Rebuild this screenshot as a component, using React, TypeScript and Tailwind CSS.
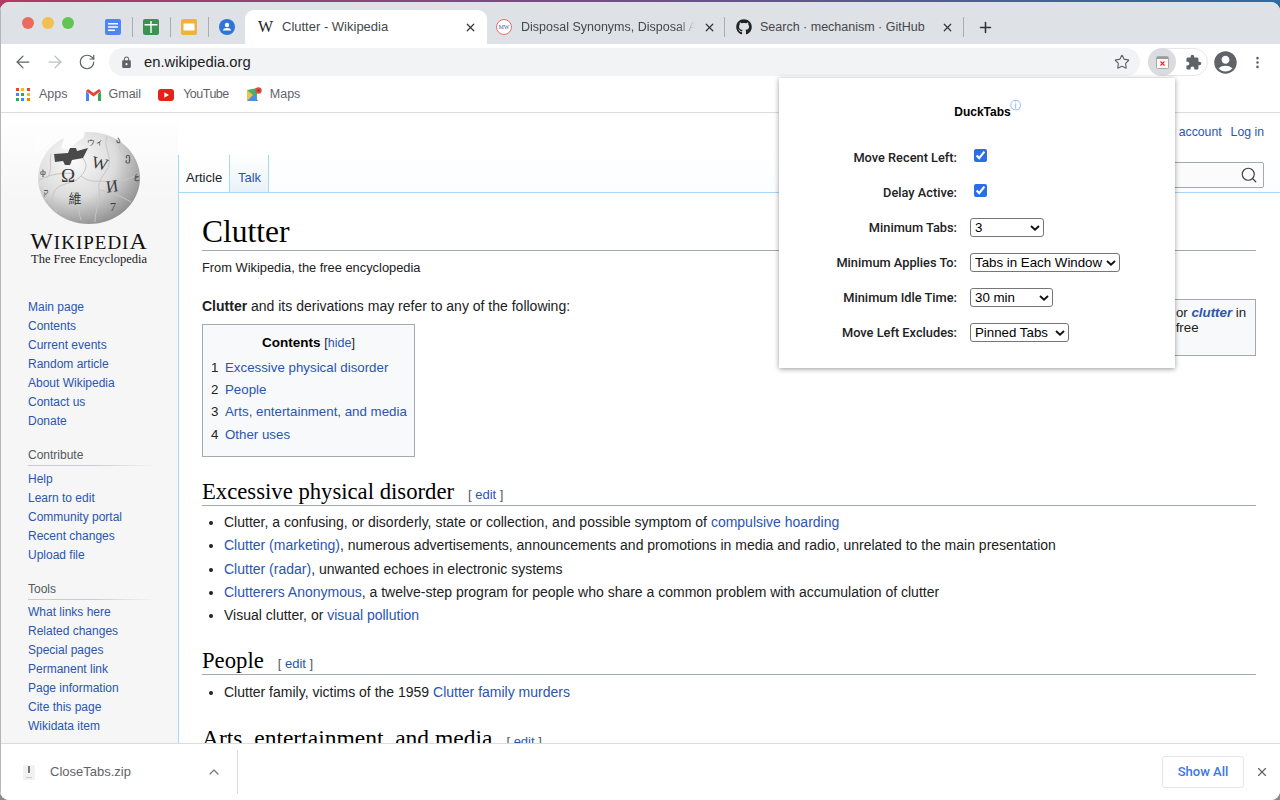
import React from 'react';
import { ArrowLeft, ArrowRight, ChevronUp, EllipsisVertical, Plus, RotateCw, Search, Star, X } from 'lucide-react';
import { FaGithub } from 'react-icons/fa';
import { MdAccountCircle, MdExtension, MdLock } from 'react-icons/md';

const mainLinks = ['Main page', 'Contents', 'Current events', 'Random article', 'About Wikipedia', 'Contact us', 'Donate'];
const contributeLinks = ['Help', 'Learn to edit', 'Community portal', 'Recent changes', 'Upload file'];
const toolLinks = ['What links here', 'Related changes', 'Special pages', 'Permanent link', 'Page information', 'Cite this page', 'Wikidata item'];
const tocItems = ['Excessive physical disorder', 'People', 'Arts, entertainment, and media', 'Other uses'];
const gridColors = ['#ea4335', '#fbbc04', '#ea4335', '#4285f4', '#34a853', '#fbbc04', '#34a853', '#4285f4', '#ea8600'];

const A = ({ children, className = '' }: { children: React.ReactNode; className?: string }) => (
  <a className={`text-[#2a55b0] ${className}`}>{children}</a>
);

const Separator = () => <div className="w-px h-5 bg-[#a9acb1]" />;

const WikiGlobe = () => (
  <svg width="104" height="96" viewBox="0 0 104 96" className="overflow-visible">
    <defs>
      <radialGradient id="globe" cx="35%" cy="30%" r="75%">
        <stop offset="0%" stopColor="#fbfbfb" />
        <stop offset="55%" stopColor="#dcdcdc" />
        <stop offset="100%" stopColor="#8f8f8f" />
      </radialGradient>
    </defs>
    <ellipse cx="52" cy="48" rx="51" ry="46" fill="url(#globe)" />
    <path d="M-2 -2 H26 L18 6 L9 16 L-2 24 Z" fill="#fdfdfd" />
    <path d="M26 -2 H48 L47 7 L40 12 L31 20 L24 18 L27 8 Z" fill="#fdfdfd" />
    <path d="M17 24 L31 23 L33 18 L39 18 L40 21 L51 18 L46 28 L35 30 L33 35 L28 35 L26 31 L18 32 Z" fill="#4a4a4a" />
    <g fill="none" stroke="#c6c6c6" strokeWidth="1">
      <path d="M46 28 C52 36 48 42 42 48 C36 54 28 52 20 58 C14 64 14 72 20 82" />
      <path d="M70 6 C66 16 74 24 72 34 C70 44 60 48 62 60 C64 70 58 80 58 92" />
      <path d="M2 50 C14 44 26 42 38 44 M44 46 C54 54 62 50 72 52 C84 54 92 48 102 44" />
      <path d="M36 62 C44 68 40 78 44 90 M62 60 C74 62 84 66 94 72" />
      <path d="M14 24 C12 34 16 40 10 48 M84 12 C80 22 88 30 96 28" />
    </g>
    <g fill="#3a3a3a" fontFamily="'Liberation Serif', serif" textAnchor="middle">
      <text x="31" y="52" fontSize="19">Ω</text>
      <text x="63" y="39" fontSize="17" transform="rotate(14 63 33)">W</text>
      <text x="75" y="62" fontSize="17" transform="rotate(-8 75 56)">И</text>
      <text x="38" y="73" fontSize="13" fontFamily="'Noto Sans CJK TC', serif">維</text>
      <text x="76" y="81" fontSize="12">7</text>
      <text x="81" y="13" fontSize="9">ა</text>
      <text x="91" y="31" fontSize="11">ე</text>
      <text x="99" y="49" fontSize="9">ع</text>
      <text x="9" y="65" fontSize="9">ק</text>
      <text x="6" y="45" fontSize="9">ф</text>
      <text x="58" y="15" fontSize="8">ウィ</text>
    </g>
  </svg>
);

const SideList = ({ items }: { items: string[] }) => (
  <ul>
    {items.map((item) => (
      <li key={item} className="h-[19px] leading-[19px] text-[12px]">
        <A>{item}</A>
      </li>
    ))}
  </ul>
);

const SideHeading = ({ children, className }: { children: string; className: string }) => (
  <div className={className}>
    <div className="h-5 leading-5 text-[12px] text-[#54595d]">{children}</div>
    <div className="h-px w-[128px] bg-linear-to-r from-[#c8ccd1] via-[#c8ccd1] to-transparent" />
  </div>
);

const Sidebar = () => (
  <aside className="w-[178px] shrink-0 bg-[linear-gradient(#fff_0,#f6f6f6_90px)]">
    <div className="pt-[17px] pl-[37px] h-[118px]">
      <WikiGlobe />
    </div>
    <div className="text-center w-[178px] font-['Liberation_Serif',serif] text-[#111]">
      <div className="h-[20px] leading-[20px] text-[19px] tracking-[1px]">
        <span className="text-[24px]">W</span>IKIPEDI<span className="text-[24px]">A</span>
      </div>
      <div className="h-[16px] leading-[16px] text-[12.5px] text-[#222]">The Free Encyclopedia</div>
    </div>
    <div className="pl-[28px] pt-[31px]">
      <SideList items={mainLinks} />
      <div className="mt-[14px]">
        <SideHeading className="mb-[4px]">Contribute</SideHeading>
        <SideList items={contributeLinks} />
      </div>
      <div className="mt-[14px]">
        <SideHeading className="mb-[3px]">Tools</SideHeading>
        <SideList items={toolLinks} />
      </div>
    </div>
  </aside>
);

const Heading = ({ title, className }: { title: string; className: string }) => (
  <h2 className={`h-[31px] border-b border-[#a2a9b1] flex items-baseline ${className}`}>
    <span className="font-['Liberation_Serif',serif] leading-[33px] text-black">{title}</span>
    <span className="ml-[14px] text-[13px] text-[#54595d]">
      [ <A>edit</A> ]
    </span>
  </h2>
);

const Article = () => (
  <main className="flex-1 min-w-0 flex flex-col">
    <div className="h-[79px] shrink-0 bg-white flex flex-col">
      <div className="h-[42px] flex justify-end items-end gap-[9px] pr-[16px] pb-[15px] text-[12.25px] leading-4">
        <A>Create account</A>
        <A>Log in</A>
      </div>
      <div className="flex-1 flex pr-[16px] bg-linear-to-b from-white to-[#fbfdff]">
        <div className="w-[51px] border-l border-[#a7d7f9] pl-[7px] pt-[14px] text-[13px] leading-[17px] text-[#202122]">Article</div>
        <div className="w-[40px] border-x border-[#a7d7f9] pl-[8px] pt-[14px] text-[13px] leading-[17px] bg-linear-to-b from-white to-[#e8f2f8]">
          <A>Talk</A>
        </div>
        <div className="flex-1" />
        <div className="mt-[7px] mb-[4px] w-[239px] border border-[#a2a9b1] rounded-[2px] bg-[#fbfbfb] flex items-center justify-end pr-[5px]">
          <Search size={18} strokeWidth={1.6} className="text-[#444]" />
        </div>
      </div>
    </div>
    <div className="flex-1 min-h-0 border-l border-t border-[#a7d7f9] bg-white pl-[23px] pr-[24px] text-[14px] text-[#202122] overflow-hidden">
      <h1 className="h-[58px] pt-[20px] border-b border-[#a2a9b1] font-['Liberation_Serif',serif] text-[31.5px] leading-[38px] text-black">Clutter</h1>
      <p className="mt-[7px] h-5 leading-5 text-[12.85px]">From Wikipedia, the free encyclopedia</p>
      <div className="float-right mt-[21px] w-[280px] h-[57px] border border-[#a2a9b1] bg-[#f8f9fa] pl-[108px] pt-[5px] text-[13.3px] leading-[15px] whitespace-nowrap">
        <div>Look up clutter or <A className="italic font-bold">clutter</A> in</div>
        <div>Wiktionary, the free</div>
        <div>dictionary.</div>
      </div>
      <p className="mt-[18px] h-5 leading-5"><b>Clutter</b> and its derivations may refer to any of the following:</p>
      <div className="mt-[8px] w-[213px] h-[133px] border border-[#a2a9b1] bg-[#f8f9fa] pt-[8px]">
        <div className="text-center h-5 leading-5 text-[13.5px]">
          <b className="text-black">Contents</b> <span className="text-[12.5px]">[<A>hide</A>]</span>
        </div>
        <ol className="mt-[4px] pl-[8px] text-[13.3px] whitespace-nowrap">
          {tocItems.map((item, i) => (
            <li key={item} className="h-[22.2px] leading-[22px] flex">
              <span className="w-[14px]">{i + 1}</span>
              <A>{item}</A>
            </li>
          ))}
        </ol>
      </div>
      <Heading title="Excessive physical disorder" className="mt-[18px] text-[22.7px]" />
      <ul className="mt-[5px] pl-[22px] list-disc leading-[23.25px]">
        <li>Clutter, a confusing, or disorderly, state or collection, and possible symptom of <A>compulsive hoarding</A></li>
        <li><A>Clutter (marketing)</A>, numerous advertisements, announcements and promotions in media and radio, unrelated to the main presentation</li>
        <li><A>Clutter (radar)</A>, unwanted echoes in electronic systems</li>
        <li><A>Clutterers Anonymous</A>, a twelve-step program for people who share a common problem with accumulation of clutter</li>
        <li>Visual clutter, or <A>visual pollution</A></li>
      </ul>
      <Heading title="People" className="mt-[17px] text-[22.7px]" />
      <ul className="mt-[6px] pl-[22px] list-disc leading-[23px]">
        <li>Clutter family, victims of the 1959 <A>Clutter family murders</A></li>
      </ul>
      <Heading title="Arts, entertainment, and media" className="mt-[18px] text-[23.5px]" />
    </div>
  </main>
);

const Row = ({ label, children }: { label: string; children: React.ReactNode }) => (
  <div className="h-[35px] flex items-center">
    <label className="w-[178px] text-right text-[12.8px] font-medium text-[#222] font-['Roboto',sans-serif] pt-[1px]">{label}</label>
    <div className="ml-[13px] flex items-center">{children}</div>
  </div>
);

const Dropdown = ({ value, width }: { value: string; width: string }) => (
  <div className={`relative ${width}`}>
    <select defaultValue={value} className="block appearance-none w-full h-[19px] border border-[#767676] rounded-[3px] bg-white pl-[4px] text-[13.3px] leading-[17px] text-black">
      <option>{value}</option>
    </select>
    <svg className="absolute right-[4px] top-[7px] pointer-events-none" width="10" height="6" viewBox="0 0 10 6">
      <path d="M1 1l4 3.6L9 1" fill="none" stroke="#111" strokeWidth="1.9" />
    </svg>
  </div>
);

const Check = () => (
  <input type="checkbox" defaultChecked className="ml-[4px] mb-[5px] w-[13px] h-[13px] accent-[#2b6fe8]" />
);

const Popup = () => (
  <div className="absolute left-[779px] top-[78px] w-[396px] h-[290px] bg-white shadow-[0_1px_5px_rgba(0,0,0,0.4)] text-black">
    <div className="h-[62px] flex justify-center pl-[21px] pt-[24px]">
      <span className="text-[12px] leading-[20px] font-bold text-black">DuckTabs</span>
      <span className="-ml-[1px] -mt-[2px] text-[11px] leading-[10px] text-[#6f9cf5]">ⓘ</span>
    </div>
    <Row label="Move Recent Left:"><Check /></Row>
    <Row label="Delay Active:"><Check /></Row>
    <Row label="Minimum Tabs:"><Dropdown value="3" width="w-[74px]" /></Row>
    <Row label="Minimum Applies To:"><Dropdown value="Tabs in Each Window" width="w-[150px]" /></Row>
    <Row label="Minimum Idle Time:"><Dropdown value="30 min" width="w-[83px]" /></Row>
    <Row label="Move Left Excludes:"><Dropdown value="Pinned Tabs" width="w-[99px]" /></Row>
  </div>
);

const DocsIcon = () => (
  <svg width="16" height="16" viewBox="0 0 16 16">
    <rect width="16" height="16" rx="2" fill="#4d86f0" />
    <path d="M3 4h10v1.6H3zM3 7.2h10v1.6H3zM3 10.4h7V12H3z" fill="#fff" />
  </svg>
);

const SheetsIcon = () => (
  <svg width="16" height="16" viewBox="0 0 16 16">
    <rect width="16" height="16" rx="2" fill="#38944f" />
    <path d="M1.5 5h5.8V2h1.4v3h5.8v1.4H8.7V14H7.3V6.4H1.5z" fill="#fff" />
  </svg>
);

const SlidesIcon = () => (
  <svg width="16" height="16" viewBox="0 0 16 16">
    <rect width="16" height="16" rx="2" fill="#eeb33a" />
    <rect x="2.5" y="4.5" width="11" height="7" fill="#fff" />
  </svg>
);

const ContactsIcon = () => (
  <svg width="16" height="16" viewBox="0 0 16 16">
    <circle cx="8" cy="8" r="8" fill="#2f74d8" />
    <circle cx="8" cy="6" r="2.2" fill="#fff" />
    <path d="M4 11.5c0-1.6 2-2.4 4-2.4s4 .8 4 2.4z" fill="#fff" />
  </svg>
);

const TabBar = () => (
  <div className="h-[42px] shrink-0 bg-[#dee1e6] flex">
    <div className="w-[105px] shrink-0 flex gap-2 pl-[22px] pt-[15px]">
      <span className="w-3 h-3 rounded-full bg-[#ed6a5e]" />
      <span className="w-3 h-3 rounded-full bg-[#f4bf4f]" />
      <span className="w-3 h-3 rounded-full bg-[#61c554]" />
    </div>
    <div className="flex items-center h-[34px] mt-[8px]">
      <div className="w-[19px] flex justify-start"><DocsIcon /></div>
      <div className="ml-[8px]"><Separator /></div>
      <div className="ml-[10px]"><SheetsIcon /></div>
      <div className="ml-[11px]"><Separator /></div>
      <div className="ml-[10px]"><SlidesIcon /></div>
      <div className="ml-[11px]"><Separator /></div>
      <div className="ml-[10px]"><ContactsIcon /></div>
    </div>
    <div className="ml-[10px] mt-[8px] w-[242px] h-[34px] bg-white rounded-t-[9px] flex items-center pl-[13px] pr-[10px]">
      <span className="w-[24px] font-['Liberation_Serif',serif] text-[16px] text-[#222]">W</span>
      <span className="flex-1 text-[13px] text-[#45474a]">Clutter - Wikipedia</span>
      <X size={13} strokeWidth={2.2} className="text-[#333]" />
    </div>
    <div className="w-[237px] h-[34px] mt-[8px] flex items-center pl-[9px] pr-[8px] text-[12.5px] text-[#45474a]">
      <span className="w-4 h-4 rounded-full border border-[#e0706a] bg-white flex items-center justify-center text-[6px] font-['Liberation_Serif',serif] text-[#2f5fa8] shrink-0">MW</span>
      <span className="ml-[9px] flex-1 overflow-hidden whitespace-nowrap mask-r-from-90%">Disposal Synonyms, Disposal Antonyms</span>
      <X size={13} strokeWidth={2.2} className="ml-[8px] text-[#333] shrink-0" />
    </div>
    <div className="w-px h-5 mt-[15px] bg-[#a9acb1]" />
    <div className="w-[238px] h-[34px] mt-[8px] flex items-center pl-[11px] pr-[9px] text-[12.5px] text-[#45474a]">
      <FaGithub size={16} className="text-[#222] shrink-0" />
      <span className="ml-2 flex-1 whitespace-nowrap">Search · mechanism · GitHub</span>
      <X size={13} strokeWidth={2.2} className="text-[#333] shrink-0" />
    </div>
    <div className="w-px h-5 mt-[15px] bg-[#a9acb1]" />
    <div className="ml-[13px] mt-[17px]">
      <Plus size={17} strokeWidth={2.2} className="text-[#333]" />
    </div>
  </div>
);

const Toolbar = () => (
  <div className="h-[36px] shrink-0 bg-white flex items-center pl-[13px]">
    <ArrowLeft size={20} strokeWidth={1.5} className="text-[#5f6368]" />
    <ArrowRight size={20} strokeWidth={1.5} className="ml-[12px] text-[#babdc1]" />
    <RotateCw size={18} strokeWidth={1.6} className="ml-[13px] text-[#5f6368]" />
    <div className="ml-[13px] w-[1031px] h-[28px] rounded-full bg-[#f1f3f4] flex items-center pl-[11px] pr-[10px]">
      <MdLock size={13} className="text-[#5f6368]" />
      <span className="ml-[11px] pt-[1px] flex-1 text-[14.75px] text-[#202124]">en.wikipedia.org</span>
      <Star size={16} strokeWidth={1.7} className="text-[#5f6368]" />
    </div>
    <div className="ml-[8px] w-[60px] h-[28px] rounded-full border border-[#e6e7e9] flex items-center">
      <div className="w-[28px] h-[28px] -ml-px rounded-full bg-[#dadce0] flex items-center justify-center">
        <svg width="13" height="13" viewBox="0 0 13 13">
          <rect x=".5" y=".5" width="12" height="12" rx="1" fill="#fbfbfb" stroke="#a8a8a8" />
          <rect x="1" y="1" width="11" height="2" fill="#9a9a9a" />
          <path d="M4.5 5.5l4 4m0-4l-4 4" stroke="#e8281e" strokeWidth="1.1" />
        </svg>
      </div>
      <MdExtension size={17} className="ml-[9px] text-[#5f6368]" />
    </div>
    <MdAccountCircle size={27} className="ml-[4px] text-[#5f6368]" />
    <EllipsisVertical size={15} strokeWidth={2.2} className="ml-[11px] text-[#5f6368]" />
  </div>
);

const Bookmarks = () => (
  <div className="h-[33px] shrink-0 bg-white border-b border-[#dadce0] flex items-center pl-[16px] pb-[3px] text-[12.5px] text-[#5f6368]">
    <div className="grid grid-cols-3 gap-[2px] w-[14px]">
      {gridColors.map((c, i) => (
        <span key={i} className="w-[3px] h-[3px]" style={{ backgroundColor: c }} />
      ))}
    </div>
    <span className="ml-[9px]">Apps</span>
    <svg className="ml-[18px]" width="15" height="12" viewBox="0 0 15 12">
      <path d="M0 2v10h3V5z" fill="#4285f4" />
      <path d="M12 5v7h3V2z" fill="#34a853" />
      <path d="M0 2l7.5 5.5L15 2 13 0 7.5 4 2 0z" fill="#ea4335" />
    </svg>
    <span className="ml-[8px]">Gmail</span>
    <svg className="ml-[17px]" width="16" height="12" viewBox="0 0 16 12">
      <rect width="16" height="12" rx="3" fill="#e62117" />
      <path d="M6.3 3.2v5.6L11 6z" fill="#fff" />
    </svg>
    <span className="ml-[9px] tracking-[-0.5px]">YouTube</span>
    <svg className="ml-[18px]" width="15" height="15" viewBox="0 0 15 15">
      <path d="M0 3l10-2v13H0z" fill="#4caf6a" />
      <path d="M0 14l7-7 4 7z" fill="#4a90e2" />
      <path d="M0 3l6 5-6 6z" fill="#f2c33d" />
      <circle cx="11.5" cy="3.5" r="3.2" fill="#dd4b3e" />
      <circle cx="11.5" cy="3.5" r="1" fill="#8a2a22" />
    </svg>
    <span className="ml-[8px]">Maps</span>
  </div>
);

const DownloadBar = () => (
  <div className="h-[57px] shrink-0 bg-white border-t border-[#dadce0] flex items-center pl-[23px] pr-[11px] text-[13px]">
    <svg width="12" height="15" viewBox="0 0 12 15">
      <path d="M0 1a1 1 0 011-1h10a1 1 0 011 1v13a1 1 0 01-1 1H1a1 1 0 01-1-1z" fill="#f1f1f1" />
      <rect x="5" y="1" width="2" height="7" fill="#777" />
      <rect x="3" y="12" width="6" height="1" fill="#ccc" />
    </svg>
    <span className="ml-[15px] w-[156px] text-[#5f6368]">CloseTabs.zip</span>
    <ChevronUp size={16} strokeWidth={1.8} className="text-[#777]" />
    <div className="ml-[15px] w-px h-[44px] bg-[#dadce0]" />
    <div className="flex-1" />
    <button className="w-[82px] h-[32px] mb-[1px] border border-[#e6e6e6] rounded-[3px] text-[#3b78e7] font-medium font-['Roboto',sans-serif] text-[13px]">Show All</button>
    <X size={14} strokeWidth={2} className="ml-[11px] text-[#5f6368]" />
  </div>
);

export default function App() {
  return (
    <div className="relative w-[1280px] h-[800px] overflow-hidden bg-[#8a8a8a] font-['Liberation_Sans',Arial,sans-serif]">
      {/* wallpaper showing above the browser window */}
      <div className="absolute inset-x-0 top-0 h-[14px] bg-[linear-gradient(90deg,#b23a63,#7a4a7f_40%,#2f6aa0)]" />
      <div className="relative mt-[2px] top-[2px] -translate-y-[2px] h-[798px] rounded-[9px] overflow-hidden flex flex-col bg-white">
        <TabBar />
        <Toolbar />
        <Bookmarks />
        <div className="flex-1 min-h-0 flex">
          <Sidebar />
          <Article />
        </div>
        <DownloadBar />
        <div className="absolute left-0 inset-y-0 w-px bg-[#b5b5b5]" />
      </div>
      <Popup />
    </div>
  );
}
